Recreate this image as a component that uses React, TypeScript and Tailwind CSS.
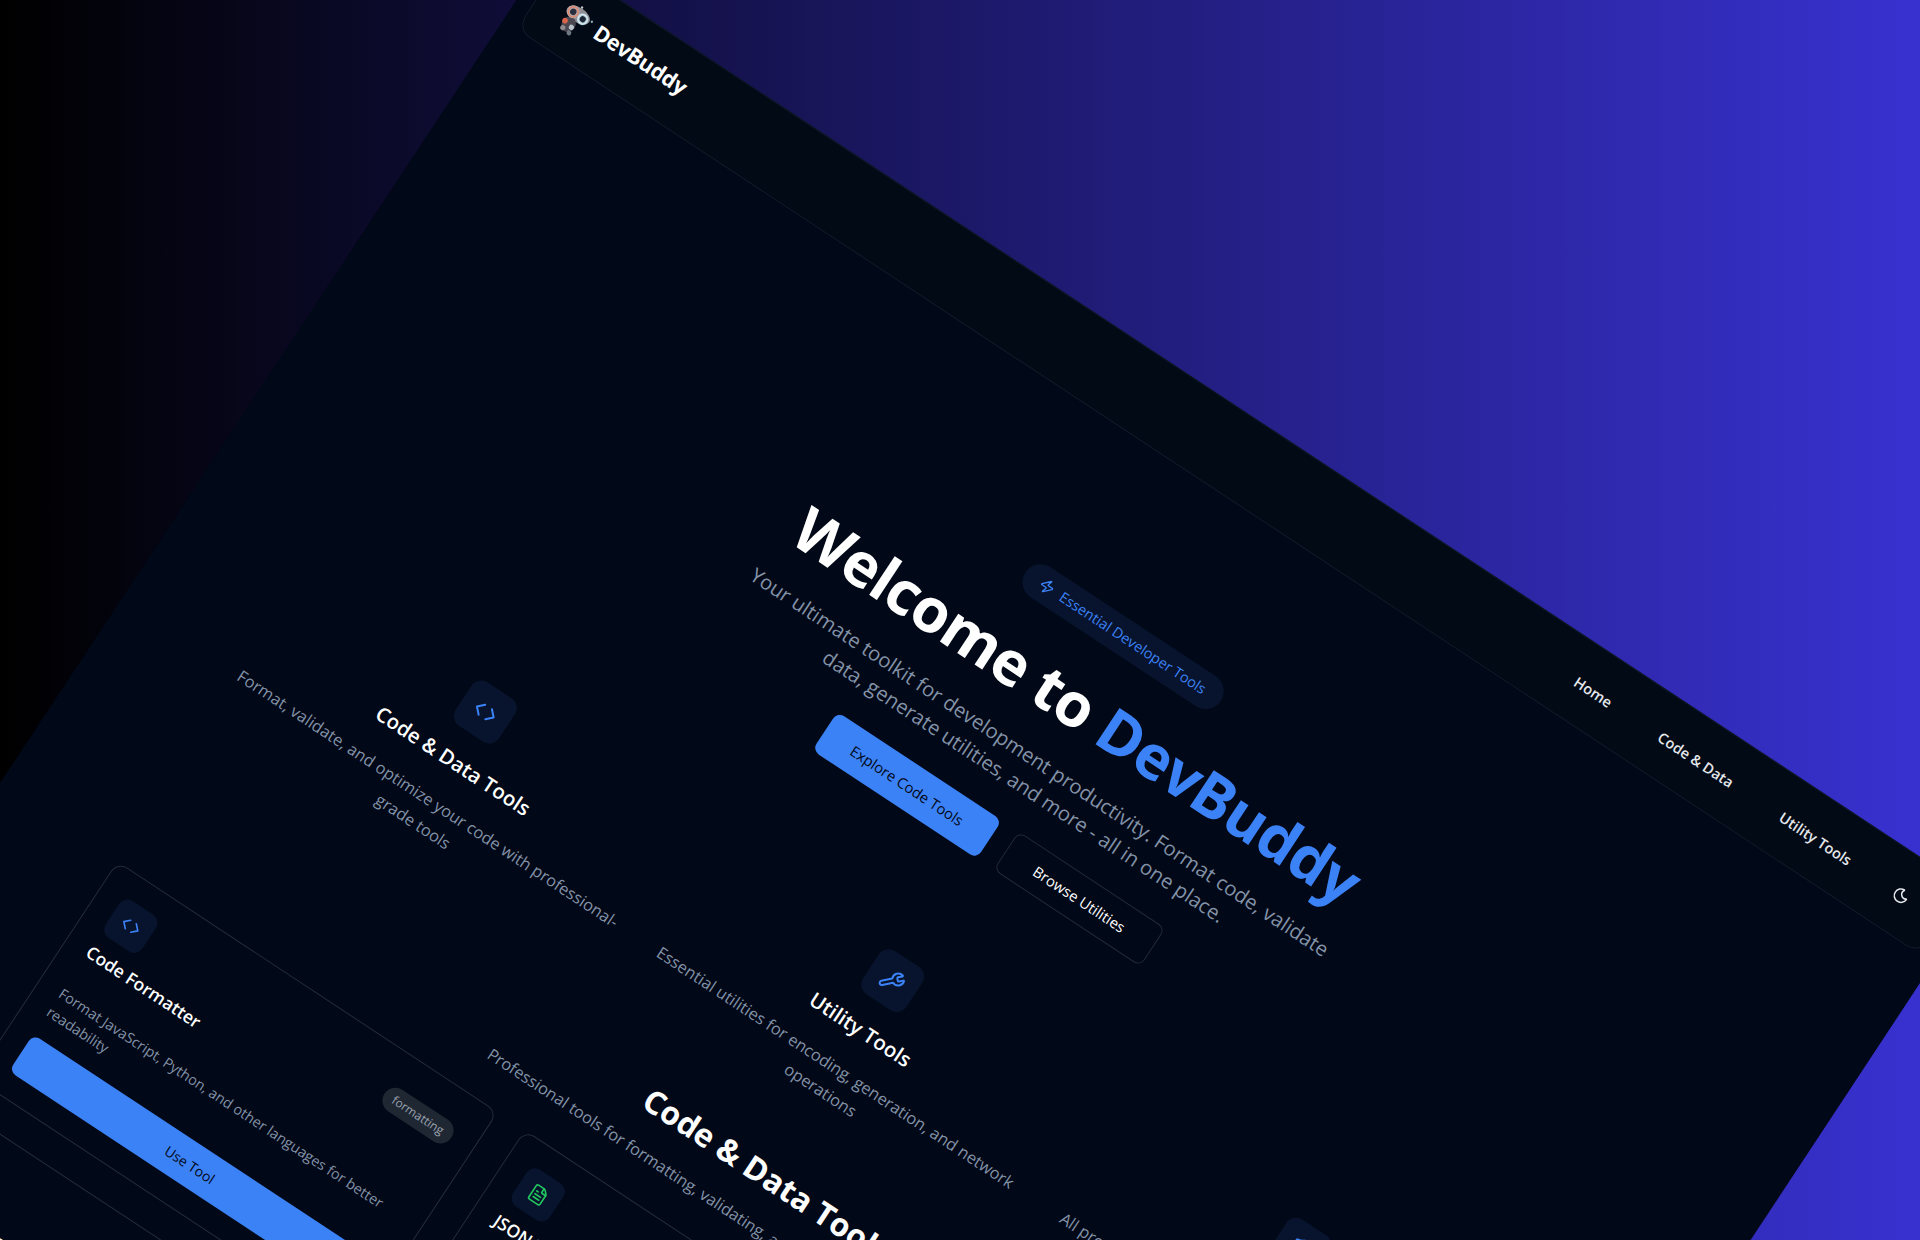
import { Code, FileText, Hash, KeyRound, Link2, Moon, Regex, Shield, Wrench, Zap } from "lucide-react";
import type { ReactNode } from "react";

interface Tool {
  title: string;
  desc: ReactNode;
  tag: string;
  icon: ReactNode;
}

const features = [
  {
    icon: <Code size={24} />,
    title: "Code & Data Tools",
    desc: <>Format, validate, and optimize your code with professional-<br />grade tools</>,
  },
  {
    icon: <Wrench size={24} />,
    title: "Utility Tools",
    desc: <>Essential utilities for encoding, generation, and network<br />operations</>,
  },
  {
    icon: <Shield size={24} />,
    title: "Privacy First",
    desc: <>All processing happens locally in your browser, your data<br />stays with you</>,
  },
];

const tools: Tool[] = [
  {
    icon: <Code size={20} className="text-[#3b82f6]" />,
    title: "Code Formatter",
    desc: <>Format JavaScript, Python, and other languages for better<br />readability</>,
    tag: "formatting",
  },
  {
    icon: <FileText size={20} className="text-[#22c55e]" />,
    title: "JSON Validator",
    desc: <>Validate, format, and inspect JSON documents with clear<br />error messages</>,
    tag: "validation",
  },
  {
    icon: <Regex size={20} className="text-[#a855f7]" />,
    title: "Regex Tester",
    desc: <>Build and test regular expressions against sample text<br />in real time</>,
    tag: "testing",
  },
  {
    icon: <Hash size={20} className="text-[#3b82f6]" />,
    title: "Hash Generator",
    desc: <>Generate MD5, SHA-1, and SHA-256 hashes from any<br />text input</>,
    tag: "security",
  },
  {
    icon: <Link2 size={20} className="text-[#22c55e]" />,
    title: "URL Encoder",
    desc: <>Encode and decode URLs and query strings safely<br />in one click</>,
    tag: "encoding",
  },
  {
    icon: <KeyRound size={20} className="text-[#a855f7]" />,
    title: "Password Generator",
    desc: <>Create strong random passwords with custom length<br />and character sets</>,
    tag: "security",
  },
];

// small robot mascot, only ~30px in the picture
const Logo = () => (
  <svg width="36" height="36" viewBox="0 0 36 36" className="shrink-0">
    <ellipse cx="19" cy="11" rx="13" ry="7.5" fill="#8f8d93" />
    <ellipse cx="16" cy="24" rx="7" ry="8" fill="#4a4750" />
    <circle cx="13" cy="11" r="6.5" fill="#b3a5a8" />
    <circle cx="25" cy="12" r="6" fill="#a7c0cc" />
    <circle cx="13" cy="11" r="3.2" fill="#2b2e3c" />
    <circle cx="25" cy="12" r="3" fill="#1c2533" />
    <circle cx="13" cy="11" r="5" fill="none" stroke="#e0876e" strokeWidth="1.3" />
    <circle cx="25" cy="12" r="4.6" fill="none" stroke="#dcebf3" strokeWidth="1.3" />
    <circle cx="11" cy="23" r="2.8" fill="#d9644a" />
    <circle cx="20" cy="25" r="2.6" fill="#b9c2c9" />
    <circle cx="13" cy="30" r="2.6" fill="#8e8a8e" />
    <circle cx="21" cy="31" r="2.4" fill="#6d7a84" />
    <circle cx="18" cy="2.5" r="1.2" fill="#c9cdd2" />
    <circle cx="34" cy="9" r="1.2" fill="#8fb0bd" />
  </svg>
);

const App = () => {
  return (
    <div className="relative h-[1240px] w-[1920px] overflow-hidden bg-linear-to-r/srgb from-black to-[#3831d0] font-['Open_Sans',sans-serif]">
      <div className="absolute left-[547.5px] top-[-47.8px] min-h-[1800px] w-[1713px] origin-top-left rotate-[33.4deg] bg-[#010817]">
        <nav className="mx-4 flex h-[82px] items-center rounded-2xl border border-[#111b2a] bg-[#020a16] pl-6 pr-[38px] pt-1">
          <Logo />
          <span className="mb-2 ml-[6px] text-[21.6px] font-bold tracking-[-0.3px] text-white">DevBuddy</span>
          <div className="ml-auto flex items-center gap-[58px] text-[14.6px] font-semibold text-[#e5e7eb]">
            <span>Home</span>
            <span>Code &amp; Data</span>
            <span>Utility Tools</span>
            <Moon size={18} className="-ml-[6px]" />
          </div>
        </nav>

        <section className="flex flex-col items-center">
          <div className="mt-[155px] flex h-9 w-[234px] items-center justify-center gap-2 rounded-full bg-[#08142d] text-[14.5px] font-medium text-[#3b82f6]">
            <Zap size={16} />
            <span>Essential Developer Tools</span>
          </div>
          <h1 className="mt-7 text-[61px] font-bold leading-[72px] tracking-[-1px] text-white">
            Welcome to <span className="text-[#3b82f6]">DevBuddy</span>
          </h1>
          <p className="mt-[18px] text-center text-[20.3px] leading-[29px] text-[#8392a7]">
            Your ultimate toolkit for development productivity. Format code, validate<br />
            data, generate utilities, and more - all in one place.
          </p>
          <div className="mt-[26px] flex gap-5">
            <button className="h-[46px] w-[197px] rounded-lg bg-[#3b82f6] text-[14.8px] font-medium text-[#020817]">Explore Code Tools</button>
            <button className="h-[46px] w-[176px] rounded-lg border border-[#1e293b] text-[14.8px] font-medium text-white">Browse Utilities</button>
          </div>
        </section>

        <section className="ml-[138px] mt-[122px] grid w-[1432px] grid-cols-3 gap-8">
          {features.map((f) => (
            <div key={f.title} className="flex flex-col items-center text-center">
              <div className="flex h-[52px] w-[52px] items-center justify-center rounded-xl bg-[#08142d] text-[#3b82f6]">{f.icon}</div>
              <h3 className="mt-4 text-[20.5px] font-semibold leading-8 text-white">{f.title}</h3>
              <p className="mt-4 whitespace-nowrap text-[16.4px] leading-[27px] text-[#8392a7]">{f.desc}</p>
            </div>
          ))}
        </section>

        <section className="mt-[66px] flex flex-col items-center">
          <h2 className="text-[32px] font-bold leading-[44px] text-white">Code &amp; Data Tools</h2>
          <p className="mt-[14px] text-[16.3px] leading-7 text-[#8392a7]">Professional tools for formatting, validating, and optimizing your code and data</p>
        </section>

        <section className="mx-auto mt-[31px] grid w-[1432px] grid-cols-3 gap-8">
          {tools.map((t) => (
            <div key={t.title} className="rounded-xl border border-[#252c38] p-6">
              <div className="flex items-center justify-between">
                <div className="flex h-11 w-11 items-center justify-center rounded-[10px] bg-[#08142d]">{t.icon}</div>
                <span className="rounded-full bg-[#1f2733] px-[10px] py-[3px] text-[12px] leading-5 text-[#9ca3af]">{t.tag}</span>
              </div>
              <h4 className="mt-[7px] text-[17.5px] font-semibold leading-7 text-white">{t.title}</h4>
              <p className="mt-[26px] whitespace-nowrap text-[14.4px] leading-[22px] text-[#8392a7]">{t.desc}</p>
              <button className="mt-[17px] h-11 w-full rounded-lg bg-[#3b82f6] text-[14px] font-medium text-[#020817]">Use Tool</button>
            </div>
          ))}
        </section>
      </div>
    </div>
  );
};

export default App;
